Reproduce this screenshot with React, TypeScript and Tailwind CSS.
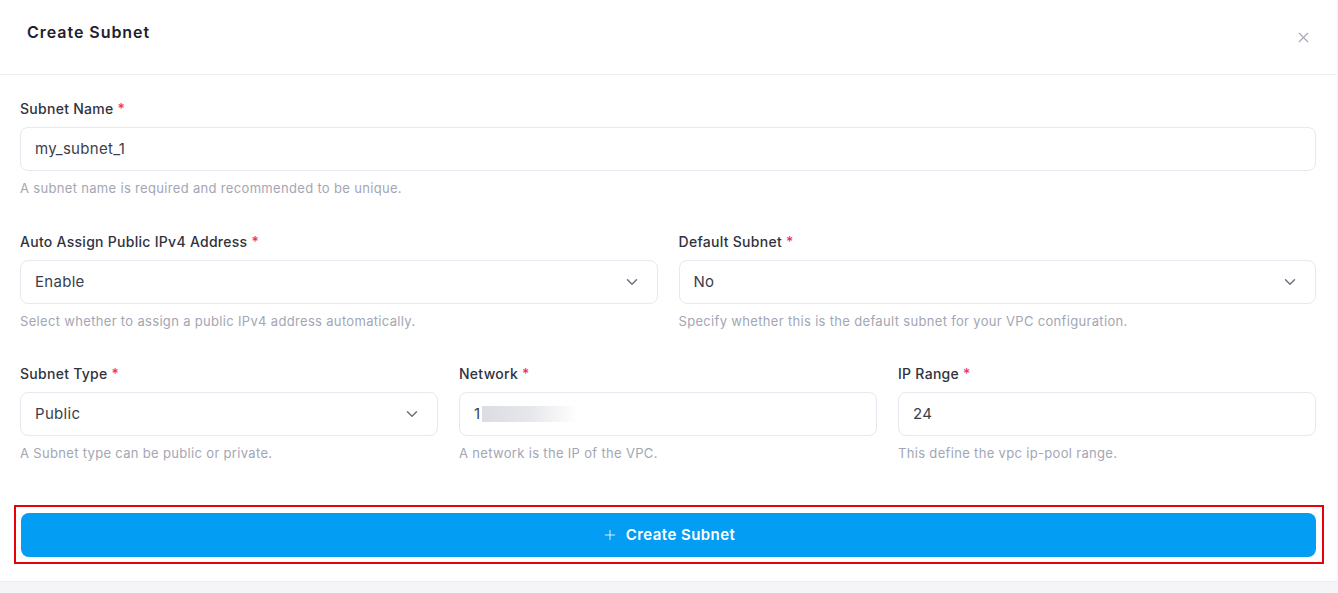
import { ChevronDown, X, Plus } from "lucide-react";

const font = { fontFamily: "Inter, 'Open Sans', sans-serif" };

function Label({ text }: { text: string }) {
  return (
    <label className="block text-[14px] leading-5 font-medium tracking-[0.02em] text-[#30333d] mb-[8px]">
      {text} <span className="text-[#f0336b]">*</span>
    </label>
  );
}

function Help({ text }: { text: string }) {
  return (
    <p className="mt-[8px] text-[13px] leading-[18px] tracking-[0.025em] text-[#a3a6b4]">{text}</p>
  );
}

function SelectBox({ value }: { value: string }) {
  return (
    <div className="h-11 flex items-center justify-between rounded-lg border border-[#e8e8f0] bg-white pl-[14px] pr-4">
      <span className="text-[15px] tracking-[0.02em] text-[#3b3e4a]">{value}</span>
      <ChevronDown className="w-[18px] h-[18px] text-[#6e7181]" strokeWidth={2} />
    </div>
  );
}

function TextBox({ children }: { children: React.ReactNode }) {
  return (
    <div className="h-11 flex items-center rounded-lg border border-[#e8e8f0] bg-white px-[14px] text-[15px] tracking-[0.02em] text-[#3b3e4a]">
      {children}
    </div>
  );
}

export default function App() {
  return (
    <div className="w-[1338px] h-[593px] bg-[#f5f5f7] flex flex-col" style={font}>
      <div className="flex bg-white">
        <div className="flex-1 min-w-0">
          <div className="h-[75px] flex items-center justify-between pl-[27px] pr-[24px] border-b border-[#f0f0f3]">
            <h2 className="text-[16px] font-semibold tracking-[0.06em] text-[#1d2130] -mt-[11px]">
              Create Subnet
            </h2>
            <X className="w-[17px] h-[17px] text-[#a4a7b8]" strokeWidth={1.5} />
          </div>

          <div className="px-5 pt-[24px] pb-[17px] flex flex-col gap-[35px]">
            <div>
              <Label text="Subnet Name" />
              <TextBox>my_subnet_1</TextBox>
              <Help text="A subnet name is required and recommended to be unique." />
            </div>

            <div className="grid grid-cols-2 gap-[21px]">
              <div>
                <Label text="Auto Assign Public IPv4 Address" />
                <SelectBox value="Enable" />
                <Help text="Select whether to assign a public IPv4 address automatically." />
              </div>
              <div>
                <Label text="Default Subnet" />
                <SelectBox value="No" />
                <Help text="Specify whether this is the default subnet for your VPC configuration." />
              </div>
            </div>

            <div className="grid grid-cols-3 gap-[21px] -mt-px">
              <div>
                <Label text="Subnet Type" />
                <SelectBox value="Public" />
                <Help text="A Subnet type can be public or private." />
              </div>
              <div>
                <Label text="Network" />
                <TextBox>
                  <span>1</span>
                  <span className="ml-[2px] h-[16px] w-[95px] bg-gradient-to-r from-[#dcdde2] via-[#e6e7eb] to-white" />
                </TextBox>
                <Help text="A network is the IP of the VPC." />
              </div>
              <div>
                <Label text="IP Range" />
                <TextBox>24</TextBox>
                <Help text="This define the vpc ip-pool range." />
              </div>
            </div>

            <div className="ml-[-6px] mr-[-8px] mt-[8px] border-2 border-[#e8000b] pl-[5px] pr-[6px] pt-[6px] pb-[5px]">
              <button className="w-full h-11 rounded-lg bg-[#049df4] flex items-center justify-center gap-2 text-white text-[15px] font-semibold tracking-[0.03em]">
                <Plus className="w-4 h-4" strokeWidth={1.25} />
                Create Subnet
              </button>
            </div>
          </div>
        </div>
        <div className="w-[2px] bg-gradient-to-r from-white to-[#f3f3f5]" />
      </div>
      <div className="flex-1 border-t border-[#eeeef1]" />
    </div>
  );
}
